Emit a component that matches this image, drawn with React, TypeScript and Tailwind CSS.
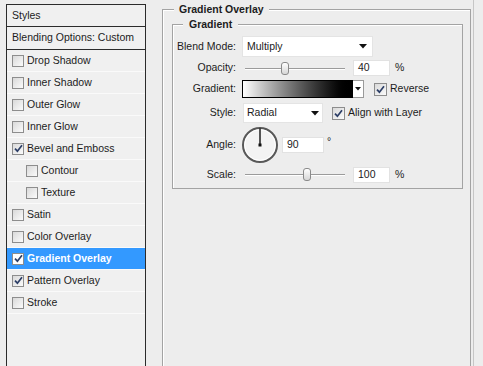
import React from 'react';
import clsx from 'clsx';

type Item = { label: string; checked?: boolean; sub?: boolean; active?: boolean };

const items: Item[] = [
  { label: 'Drop Shadow' },
  { label: 'Inner Shadow' },
  { label: 'Outer Glow' },
  { label: 'Inner Glow' },
  { label: 'Bevel and Emboss', checked: true },
  { label: 'Contour', sub: true },
  { label: 'Texture', sub: true },
  { label: 'Satin' },
  { label: 'Color Overlay' },
  { label: 'Gradient Overlay', checked: true, active: true },
  { label: 'Pattern Overlay', checked: true },
  { label: 'Stroke' },
];

function Check({ checked, className }: { checked?: boolean; className?: string }) {
  return (
    <span
      className={clsx(
        'flex h-[12px] w-[12px] shrink-0 items-center justify-center border border-[#8d8d8d] bg-linear-to-br from-[#d9d9d9] to-[#fbfbfb]',
        className,
      )}
    >
      {checked && (
        <svg width="9" height="9" viewBox="0 0 9 9">
          <path d="M1 4.6 L3.4 7.2 L8 1.2" fill="none" stroke="#2c3e66" strokeWidth="1.7" />
        </svg>
      )}
    </span>
  );
}

function Arrow() {
  return (
    <svg width="8" height="5" viewBox="0 0 8 5">
      <path d="M0 0 H8 L4 4.5 Z" fill="#111" />
    </svg>
  );
}

function Slider({ thumb }: { thumb: string }) {
  return (
    <div className="relative ml-[8px] h-[13px] w-[100px]">
      <div className="absolute left-0 right-0 top-[6px] h-[2px] border-t border-b border-t-[#9b9b9b] border-b-white" />
      <div
        className={clsx(
          'absolute top-0 h-[13px] w-[8px] rounded-[3px] border border-[#8a8a8a] bg-linear-to-b from-white to-[#d6d6d6]',
          thumb,
        )}
      />
    </div>
  );
}

function Field({ value, className }: { value: string; className?: string }) {
  return (
    <div className={clsx('flex h-[16px] items-center border border-[#e2e2e2] bg-white pl-[4px]', className)}>
      {value}
    </div>
  );
}

function Label({ children }: { children: React.ReactNode }) {
  return <div className="w-[64px] shrink-0 pr-[1px] text-right">{children}</div>;
}

function Dial() {
  return (
    <svg width="38" height="38" viewBox="0 0 38 38">
      <circle cx="19" cy="19" r="17" fill="#f3f3f3" stroke="#585858" strokeWidth="2" />
      <circle cx="19" cy="19" r="15.3" fill="none" stroke="#ffffff" strokeWidth="1" />
      <line x1="19" y1="19" x2="19" y2="2.5" stroke="#111" strokeWidth="1.4" />
      <rect x="17.5" y="17.5" width="3" height="3" fill="#111" />
    </svg>
  );
}

export default function App() {
  return (
    <div className="flex h-[366px] w-[483px] items-start overflow-hidden bg-[#ededed] pl-[6px] font-[Liberation_Sans,Tahoma,sans-serif] text-[10.5px] text-[#1c1c1c]">
      {/* styles list */}
      <div className="mt-[4px] h-[380px] w-[140px] shrink-0 border border-[#2b2b2b] bg-[#f0f0f0]">
        <div className="flex h-[22px] items-center border-b border-[#2b2b2b] pl-[5px]">Styles</div>
        <div className="flex h-[23px] items-center border-b border-[#2b2b2b] pl-[5px]">Blending Options: Custom</div>
        {items.map((it) => (
          <div
            key={it.label}
            className={clsx(
              'flex h-[22px] items-center border-b border-[#fafafa]',
              it.sub ? 'pl-[19px]' : 'pl-[5px]',
              it.active && 'bg-[#3399ff] font-bold text-white',
            )}
          >
            <Check checked={it.checked} className={it.active ? 'bg-none bg-white' : undefined} />
            <span className="ml-[3px]">{it.label}</span>
          </div>
        ))}
      </div>

      {/* settings */}
      <fieldset className="ml-[16px] mt-[3px] h-[380px] w-[309px] shrink-0 border border-[#a3a3a3] pl-[9px] shadow-[inset_1px_1px_0_#fff]">
        <legend className="ml-[2px] bg-[#ededed] px-[5px] font-bold leading-[13px]">Gradient Overlay</legend>
        <fieldset className="mt-[2px] w-[291px] border border-[#a3a3a3] pb-[6px] pt-[5px] shadow-[inset_1px_1px_0_#fff]">
          <legend className="ml-[10px] bg-[#ededed] px-[6px] font-bold leading-[13px]">Gradient</legend>

          <div className="flex h-[21px] items-center">
            <Label>Blend Mode:</Label>
            <div className="ml-[5px] flex h-[21px] w-[131px] items-center justify-between border border-[#e4e4e4] bg-white pl-[4px] pr-[5px]">
              <span>Multiply</span>
              <Arrow />
            </div>
          </div>

          <div className="mt-[3px] flex h-[16px] items-center">
            <Label>Opacity:</Label>
            <Slider thumb="left-[36px]" />
            <Field value="40" className="ml-[8px] w-[37px]" />
            <span className="ml-[5px]">%</span>
          </div>

          <div className="mt-[4px] flex h-[18px] items-center">
            <Label>Gradient:</Label>
            <div className="ml-[5px] flex h-[18px]">
              <div className="h-[18px] w-[111px] border border-black bg-linear-to-r from-white to-black" />
              <div className="flex h-[18px] w-[11px] items-center justify-center border border-l-0 border-[#9a9a9a] bg-white">
                <svg width="6" height="4" viewBox="0 0 6 4">
                  <path d="M0 0 H6 L3 3.5 Z" fill="#111" />
                </svg>
              </div>
            </div>
            <Check checked className="ml-[10px] h-[13px] w-[13px]" />
            <span className="ml-[3px]">Reverse</span>
          </div>

          <div className="mt-[5px] flex h-[20px] items-center">
            <Label>Style:</Label>
            <div className="ml-[6px] flex h-[20px] w-[80px] items-center justify-between border border-[#e4e4e4] bg-white pl-[3px] pr-[3px]">
              <span>Radial</span>
              <Arrow />
            </div>
            <Check checked className="ml-[9px] h-[13px] w-[13px]" />
            <span className="ml-[3px]">Align with Layer</span>
          </div>

          <div className="mt-[4px] flex h-[36px] items-center">
            <Label>Angle:</Label>
            <div className="ml-[4px] flex">
              <Dial />
            </div>
            <Field value="90" className="ml-[3px] w-[42px]" />
            <span className="mb-[6px] ml-[3px]">°</span>
          </div>

          <div className="mt-[4px] flex h-[15px] items-center">
            <Label>Scale:</Label>
            <Slider thumb="left-[58px]" />
            <Field value="100" className="ml-[8px] w-[37px]" />
            <span className="ml-[5px]">%</span>
          </div>
        </fieldset>
      </fieldset>
      <div className="ml-[2px] h-[366px] w-px shrink-0 bg-[#c6c6c6]" />
    </div>
  );
}
